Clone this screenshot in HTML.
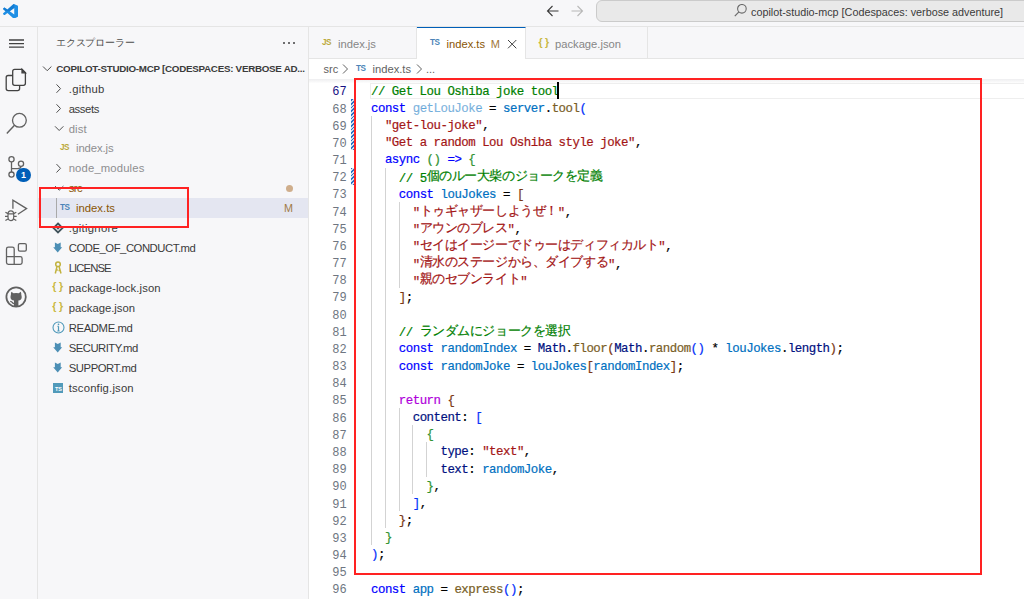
<!DOCTYPE html><html><head><meta charset="utf-8"><style>
*{margin:0;padding:0;box-sizing:border-box}
html,body{width:1024px;height:599px;overflow:hidden;background:#fff}
body{position:relative;font-family:"Liberation Sans",sans-serif;color:#3b3b3b}
.abs{position:absolute}
.t{position:absolute;white-space:pre}
.code{position:absolute;white-space:pre;-webkit-text-stroke:0.2px currentColor;font-family:"Liberation Mono",monospace;font-size:12.4px;letter-spacing:-0.490px;line-height:17.17px;height:17.17px}
.ln{position:absolute;white-space:pre;font-family:"Liberation Mono",monospace;font-size:12px;letter-spacing:0.05px;text-align:right;width:40px;line-height:17.17px;color:#6e7681}
.j{display:inline-block;width:12.57px;text-align:center;letter-spacing:0;font-size:12.6px;position:relative;top:-1.5px;font-family:"Liberation Sans",sans-serif;overflow:visible}
</style></head><body>

<div class="abs" style="left:0;top:0;width:1024px;height:27px;background:#f7f7f9;border-bottom:1px solid #e5e5e5"></div>
<svg class="abs" style="left:3.3px;top:3.6px" width="15" height="14.6" viewBox="0 0 100 100" preserveAspectRatio="none">
<path d="M96.46 10.8 L75.86 0.87 C73.48 -0.28 70.63 0.2 68.76 2.07 L29.35 38.04 L12.17 25.01 C10.57 23.8 8.34 23.9 6.86 25.25 L1.35 30.26 C-0.46 31.91 -0.46 34.76 1.35 36.41 L16.25 50 L1.35 63.59 C-0.46 65.24 -0.46 68.09 1.35 69.74 L6.86 74.75 C8.34 76.1 10.57 76.2 12.17 74.99 L29.35 61.96 L68.76 97.93 C70.63 99.8 73.48 100.28 75.86 99.13 L96.46 89.2 C98.62 88.16 100 85.97 100 83.57 V16.43 C100 14.03 98.62 11.84 96.46 10.8 Z M75.02 72.7 L45.11 50 L75.02 27.3 Z" fill="#1f8fe5"/>
<path d="M68.76 2.07 L29.35 38.04 L12.17 25.01 C10.57 23.8 8.34 23.9 6.86 25.25 L1.35 30.26 C-0.46 31.91 -0.46 34.76 1.35 36.41 L16.25 50 L45.11 50 L75.02 27.3 L75.02 0.5 Z" fill="#0b6fc7" opacity="0.55"/>
</svg>
<svg class="abs" style="left:546px;top:5px" width="14" height="12" viewBox="0 0 14 12">
<path d="M6.5 1 L1.5 6 L6.5 11 M1.5 6 H12.5" stroke="#3b3b3b" stroke-width="1.1" fill="none"/></svg>
<svg class="abs" style="left:570px;top:5px" width="14" height="12" viewBox="0 0 14 12">
<path d="M7.5 1 L12.5 6 L7.5 11 M12.5 6 H1.5" stroke="#b8b8b8" stroke-width="1.1" fill="none"/></svg>
<div class="abs" style="left:596px;top:0px;width:440px;height:21.6px;background:#e9e9e9;border:1px solid #cbcbcb;border-radius:6px"></div>
<svg class="abs" style="left:734px;top:4px" width="13" height="13" viewBox="0 0 13 13">
<circle cx="7.9" cy="4.8" r="4.3" stroke="#6a6a6a" stroke-width="1.1" fill="none"/><path d="M4.9 7.9 L0.8 12.2" stroke="#6a6a6a" stroke-width="1.2"/></svg>
<div class="t" style="left:751px;top:4.86px;font-size:10.8px;line-height:14px;color:#3b3b3b">copilot-studio-mcp [Codespaces: verbose adventure]</div>
<div class="abs" style="left:0;top:27px;width:38px;height:572px;background:#f7f7f9;border-right:1px solid #e5e5e5"></div>
<svg class="abs" style="left:0;top:27px" width="37" height="300" viewBox="0 27 37 300">
<g stroke="#424242" fill="none" stroke-width="1.3">
<path d="M9 40 H24 M9 43.6 H24 M9 47.2 H24"/>
<path d="M12.6 75.5 H8.2 Q6.2 75.5 6.2 77.5 V88.6 Q6.2 90.6 8.2 90.6 H17.6 Q19.6 90.6 19.6 88.6 V85.4"/>
<path d="M14.7 69.4 H22 L25.4 72.8 V83.3 Q25.4 85.3 23.4 85.3 H14.7 Q12.7 85.3 12.7 83.3 V71.4 Q12.7 69.4 14.7 69.4 Z"/>
<path d="M22 69.4 V72.8 H25.4 Z" fill="#424242"/>
</g><g stroke="#616161" fill="none" stroke-width="1.3">
<circle cx="19.4" cy="120.3" r="6.9"/>
<path d="M14.5 125.3 L6.8 133.6" stroke-width="1.4"/>
<circle cx="11.5" cy="159.3" r="2.6"/><circle cx="11.5" cy="174.6" r="2.6"/><circle cx="21" cy="163.7" r="2.6"/>
<path d="M11.5 161.9 V172 M11.5 168.7 H17.5 Q21 168.7 21 166.3"/>
<path d="M12.9 208.8 V200.2 L26.6 208.6 L17.9 214.3"/>
<path d="M8 217 V214.2 Q8 210.9 10.85 210.9 Q13.7 210.9 13.7 214.2 V217 Q13.7 220.6 10.85 220.6 Q8 220.6 8 217 Z M8 213.8 H13.7 M5.4 212.2 L8 213.6 M16.3 212.2 L13.7 213.6 M5 216.4 H8 M13.7 216.4 H16.7 M5.4 220.6 L8 219 M16.3 220.6 L13.7 219" stroke-width="1.2"/>
<path d="M8.3 247.2 H12.4 Q14.2 247.2 14.2 249 V256.7 H20.3 Q22.1 256.7 22.1 258.5 V262.5 Q22.1 264.3 20.3 264.3 H8.3 Q6.5 264.3 6.5 262.5 V249 Q6.5 247.2 8.3 247.2 Z M6.5 256.7 H14.2 V264.3"/>
<rect x="18.4" y="243.6" width="7.9" height="7.6" rx="1.4"/>
</g>
<circle cx="16.1" cy="297" r="9.7" stroke="#616161" stroke-width="1.8" fill="none"/>
<g transform="translate(16.1 297)">
<path d="M-4.7 -5.2 L-2.6 -3.8 Q0 -4.4 2.6 -3.8 L4.7 -5.2 Q5.3 -3.6 5.2 -2.2 Q5.6 -1 5.6 0.3 Q5.6 3.2 2.3 3.6 V9.6 H-2.1 V3.6 Q-5.6 3.2 -5.6 0.3 Q-5.6 -1 -5.2 -2.2 Q-5.3 -3.6 -4.7 -5.2 Z" fill="#616161"/>
<path d="M-5.9 4.3 Q-4.5 4.3 -3.6 5.6 Q-3 6.5 -2.1 6.6" stroke="#616161" stroke-width="1.3" fill="none"/>
</g>
</svg>
<div class="abs" style="left:16.4px;top:167.6px;width:14.2px;height:14.2px;border-radius:50%;background:#005fb8;color:#fff;font-size:9px;font-weight:bold;line-height:14.2px;text-align:center">1</div>
<div class="abs" style="left:38px;top:27px;width:271px;height:572px;background:#f7f7f9;border-right:1px solid #e5e5e5"></div>
<div class="t" style="left:56px;top:36.14px;font-size:10px;line-height:14px;color:#4b4b4b"><span style="display:inline-block;width:9.8px;text-align:center">エ</span><span style="display:inline-block;width:9.8px;text-align:center">ク</span><span style="display:inline-block;width:9.8px;text-align:center">ス</span><span style="display:inline-block;width:9.8px;text-align:center">プ</span><span style="display:inline-block;width:9.8px;text-align:center">ロ</span><span style="display:inline-block;width:9.8px;text-align:center">ー</span><span style="display:inline-block;width:9.8px;text-align:center">ラ</span><span style="display:inline-block;width:9.8px;text-align:center">ー</span></div>
<div class="abs" style="left:283px;top:42px;width:2px;height:2px;background:#424242;border-radius:1px"></div>
<div class="abs" style="left:288px;top:42px;width:2px;height:2px;background:#424242;border-radius:1px"></div>
<div class="abs" style="left:293px;top:42px;width:2px;height:2px;background:#424242;border-radius:1px"></div>
<svg class="abs" style="left:0;top:0" width="320" height="599"><path d="M43.0 66.5 L47.2 70.7 L51.4 66.5" stroke="#505050" stroke-width="1" fill="none"/></svg>
<div class="t" style="left:56.3px;top:62.24px;font-size:9.8px;font-weight:bold;letter-spacing:-0.27px;line-height:14px;color:#3b3b3b">COPILOT-STUDIO-MCP [CODESPACES: VERBOSE AD...</div>
<div class="abs" style="left:38px;top:198px;width:270px;height:19.8px;background:#e4e6f1"></div>
<div class="abs" style="left:56px;top:198px;width:1px;height:19.8px;background:#a9a9a9"></div>
<svg class="abs" style="left:0;top:0" width="320" height="599"><path d="M56.5 84.4 L60.5 88.6 L56.5 92.8" stroke="#505050" stroke-width="1" fill="none"/></svg>
<div class="t" style="left:68.7px;top:80.68px;font-size:11.3px;line-height:16px;color:#3b3b3b;letter-spacing:0.30px">.github</div>
<svg class="abs" style="left:0;top:0" width="320" height="599"><path d="M56.5 104.3 L60.5 108.5 L56.5 112.7" stroke="#505050" stroke-width="1" fill="none"/></svg>
<div class="t" style="left:68.7px;top:100.61px;font-size:11.3px;line-height:16px;color:#3b3b3b;letter-spacing:-0.40px">assets</div>
<svg class="abs" style="left:0;top:0" width="320" height="599"><path d="M55.0 126.3 L59.2 130.5 L63.4 126.3" stroke="#505050" stroke-width="1" fill="none"/></svg>
<div class="t" style="left:68.7px;top:120.54px;font-size:11.3px;line-height:16px;color:#8e8e90;letter-spacing:0.10px">dist</div>
<div class="t" style="left:60px;top:143.39px;font-size:9.5px;font-weight:bold;line-height:10px;letter-spacing:-0.5px;transform:translateY(-0.6px) scaleX(0.86);transform-origin:0 0;color:#bba93a">JS</div>
<div class="t" style="left:76.0px;top:140.47px;font-size:11.3px;line-height:16px;color:#8e8e90;letter-spacing:-0.10px">index.js</div>
<svg class="abs" style="left:0;top:0" width="320" height="599"><path d="M56.5 164.1 L60.5 168.3 L56.5 172.5" stroke="#505050" stroke-width="1" fill="none"/></svg>
<div class="t" style="left:68.7px;top:160.40px;font-size:11.3px;line-height:16px;color:#8e8e90;letter-spacing:0.14px">node_modules</div>
<svg class="abs" style="left:0;top:0" width="320" height="599"><path d="M55.0 186.1 L59.2 190.2 L63.4 186.1" stroke="#505050" stroke-width="1" fill="none"/></svg>
<div class="t" style="left:68.7px;top:180.33px;font-size:11.3px;line-height:16px;color:#895503;letter-spacing:-0.50px">src</div>
<div class="t" style="left:60px;top:203.18px;font-size:9.5px;font-weight:bold;line-height:10px;letter-spacing:-0.5px;transform:translateY(-0.6px) scaleX(0.86);transform-origin:0 0;color:#4c84b8">TS</div>
<div class="t" style="left:76.0px;top:200.26px;font-size:11.3px;line-height:16px;color:#895503;letter-spacing:0.00px">index.ts</div>
<svg class="abs" style="left:52px;top:222.11px" width="12" height="12" viewBox="0 0 12 12"><path d="M6 1.5 L10.5 6 L6 10.5 L1.5 6 Z" fill="none" stroke="#41535b" stroke-width="1.8"/><path d="M6 4.3 L7.7 6 L6 7.7 L4.3 6 Z" fill="#41535b"/></svg>
<div class="t" style="left:68.7px;top:220.19px;font-size:11.3px;line-height:16px;color:#3b3b3b;letter-spacing:0.30px">.gitignore</div>
<svg class="abs" style="left:52px;top:242.04px" width="12" height="12" viewBox="0 0 12 12"><path d="M2.9 0.5 L5.8 2.1 L8.7 0.5 V5.3 H10.2 L5.7 10.4 L1.2 5.3 H2.9 Z" fill="#4d8fb5"/></svg>
<div class="t" style="left:68.7px;top:240.12px;font-size:11.3px;line-height:16px;color:#3b3b3b;letter-spacing:-0.46px">CODE_OF_CONDUCT.md</div>
<svg class="abs" style="left:53px;top:261.47px" width="10" height="13" viewBox="0 0 10 13"><circle cx="5" cy="3.2" r="2.3" stroke="#c2b340" stroke-width="1.5" fill="none"/><path d="M4 5.3 L2.3 12.5 M6 5.3 L8 12.5 M3 9 H4.8 M5.5 9.5 H7" stroke="#c2b340" stroke-width="1.5" fill="none"/></svg>
<div class="t" style="left:68.7px;top:260.05px;font-size:11.3px;line-height:16px;color:#3b3b3b;letter-spacing:-0.90px">LICENSE</div>
<div class="t" style="left:52.3px;top:279.90px;font-size:10.5px;font-weight:bold;line-height:12px;color:#c9b740;letter-spacing:-0.2px">{ }</div>
<div class="t" style="left:68.7px;top:279.98px;font-size:11.3px;line-height:16px;color:#3b3b3b;letter-spacing:0.09px">package-lock.json</div>
<div class="t" style="left:52.3px;top:299.83px;font-size:10.5px;font-weight:bold;line-height:12px;color:#c9b740;letter-spacing:-0.2px">{ }</div>
<div class="t" style="left:68.7px;top:299.91px;font-size:11.3px;line-height:16px;color:#3b3b3b;letter-spacing:-0.03px">package.json</div>
<svg class="abs" style="left:51.5px;top:321.26px" width="13" height="13" viewBox="0 0 13 13"><circle cx="6.5" cy="6.5" r="5.5" stroke="#519aba" stroke-width="1.1" fill="none"/><path d="M6.5 5.3 V10 M5.3 10 H7.7 M5.5 5.3 H6.5" stroke="#519aba" stroke-width="1.2"/><circle cx="6.5" cy="3.4" r="0.8" fill="#519aba"/></svg>
<div class="t" style="left:68.7px;top:319.84px;font-size:11.3px;line-height:16px;color:#3b3b3b;letter-spacing:-0.37px">README.md</div>
<svg class="abs" style="left:52px;top:341.69px" width="12" height="12" viewBox="0 0 12 12"><path d="M2.9 0.5 L5.8 2.1 L8.7 0.5 V5.3 H10.2 L5.7 10.4 L1.2 5.3 H2.9 Z" fill="#4d8fb5"/></svg>
<div class="t" style="left:68.7px;top:339.77px;font-size:11.3px;line-height:16px;color:#3b3b3b;letter-spacing:-0.50px">SECURITY.md</div>
<svg class="abs" style="left:52px;top:361.62px" width="12" height="12" viewBox="0 0 12 12"><path d="M2.9 0.5 L5.8 2.1 L8.7 0.5 V5.3 H10.2 L5.7 10.4 L1.2 5.3 H2.9 Z" fill="#4d8fb5"/></svg>
<div class="t" style="left:68.7px;top:359.70px;font-size:11.3px;line-height:16px;color:#3b3b3b;letter-spacing:-0.43px">SUPPORT.md</div>
<div class="abs" style="left:52.5px;top:382.55px;width:10px;height:10px;background:#519aba"><div class="t" style="left:2.5px;top:3px;font-size:5.5px;font-weight:bold;line-height:7px;color:#fff">TS</div></div>
<div class="t" style="left:68.7px;top:379.63px;font-size:11.3px;line-height:16px;color:#3b3b3b;letter-spacing:0.18px">tsconfig.json</div>
<div class="abs" style="left:285.5px;top:184.5px;width:7px;height:7px;border-radius:50%;background:#cfae8c"></div>
<div class="t" style="left:284px;top:200.26px;font-size:10.8px;line-height:16px;color:#895503;opacity:.75">M</div>
<div class="abs" style="left:39px;top:187px;width:150px;height:40.6px;border:2px solid #ff2222;z-index:5"></div>
<div class="abs" style="left:309px;top:27px;width:715px;height:572px;background:#ffffff"></div>
<div class="abs" style="left:309px;top:27px;width:715px;height:32px;background:#f7f7f9;border-bottom:1px solid #e5e5e5"></div>
<div class="abs" style="left:309px;top:27px;width:108px;height:31.5px;border-right:1px solid #e5e5e5"></div>
<div class="t" style="left:322px;top:38.00px;font-size:9.5px;font-weight:bold;line-height:10px;letter-spacing:-0.5px;transform:translateY(-0.6px) scaleX(0.86);transform-origin:0 0;color:#bba93a">JS</div>
<div class="t" style="left:338px;top:35.62px;font-size:11.2px;line-height:16px;color:#868686">index.js</div>
<div class="abs" style="left:417px;top:27px;width:109px;height:32px;background:#fff;border-top:1px solid #005fb8;border-right:1px solid #e5e5e5"></div>
<div class="t" style="left:430px;top:38.00px;font-size:9.5px;font-weight:bold;line-height:10px;letter-spacing:-0.5px;transform:translateY(-0.6px) scaleX(0.86);transform-origin:0 0;color:#4c84b8">TS</div>
<div class="t" style="left:446.5px;top:35.62px;font-size:11.2px;line-height:16px;color:#895503">index.ts</div>
<div class="t" style="left:490.8px;top:35.69px;font-size:11px;line-height:16px;color:#895503;opacity:.8">M</div>
<svg class="abs" style="left:507px;top:38.5px" width="10" height="10" viewBox="0 0 10 10"><path d="M1 1 L9.3 9.3 M9.3 1 L1 9.3" stroke="#424242" stroke-width="1"/></svg>
<div class="abs" style="left:526px;top:27px;width:121.5px;height:31.5px;border-right:1px solid #e5e5e5"></div>
<div class="t" style="left:538.5px;top:35.50px;font-size:10.5px;font-weight:bold;line-height:12px;color:#c9b740;letter-spacing:-0.2px">{ }</div>
<div class="t" style="left:555px;top:35.62px;font-size:11.2px;line-height:16px;color:#868686">package.json</div>
<div class="t" style="left:323.5px;top:60.89px;font-size:11px;line-height:16px;color:#616161">src</div>
<svg class="abs" style="left:341px;top:62px" width="9" height="14" viewBox="0 0 9 14"><path d="M2 2.5 L6.5 7 L2 11.5" stroke="#616161" stroke-width="1" fill="none"/></svg>
<div class="t" style="left:356px;top:63.50px;font-size:9.5px;font-weight:bold;line-height:10px;letter-spacing:-0.5px;transform:translateY(-0.6px) scaleX(0.86);transform-origin:0 0;color:#4c84b8">TS</div>
<div class="t" style="left:372.5px;top:60.82px;font-size:11.2px;line-height:16px;color:#616161">index.ts</div>
<svg class="abs" style="left:415px;top:62px" width="9" height="14" viewBox="0 0 9 14"><path d="M2 2.5 L6.5 7 L2 11.5" stroke="#616161" stroke-width="1" fill="none"/></svg>
<div class="t" style="left:426px;top:60.89px;font-size:11px;line-height:16px;color:#616161">...</div>
<div class="abs" style="left:309px;top:79px;width:715px;height:4px;background:linear-gradient(#eeeef0,#fdfdfd)"></div>
<div class="abs" style="left:370px;top:82.70px;width:654px;height:16.17px;border:1px solid #eeeeee;border-right:none"></div>
<div class="abs" style="left:371.0px;top:116.04px;width:1px;height:429.25px;background:#d3d3d3"></div>
<div class="abs" style="left:385.0px;top:167.55px;width:1px;height:360.57px;background:#d3d3d3"></div>
<div class="abs" style="left:398.5px;top:201.89px;width:1px;height:85.85px;background:#d3d3d3"></div>
<div class="abs" style="left:398.5px;top:407.93px;width:1px;height:103.02px;background:#d3d3d3"></div>
<div class="abs" style="left:412.0px;top:425.10px;width:1px;height:68.68px;background:#d3d3d3"></div>
<div class="abs" style="left:426.0px;top:442.27px;width:1px;height:34.34px;background:#d3d3d3"></div>
<div class="abs" style="left:351px;top:98.87px;width:3px;height:51.51px;background:repeating-linear-gradient(-45deg,#2a72c4 0 1.3px,#cfe0f2 1.3px 2.6px)"></div>
<div class="abs" style="left:351px;top:167.55px;width:3px;height:17.17px;background:repeating-linear-gradient(-45deg,#2a72c4 0 1.3px,#cfe0f2 1.3px 2.6px)"></div>
<div class="ln" style="left:306.8px;top:84.42px;color:#171184">67</div>
<div class="code" style="left:371.00px;top:83.81px"><span style="color:#008000">// Get Lou Oshiba joke tool</span></div>
<div class="ln" style="left:306.8px;top:101.59px;color:#6e7681">68</div>
<div class="code" style="left:371.00px;top:100.98px"><span style="color:#0000ff">const</span><span style="color:#000000"> </span><span style="color:rgba(0,112,193,0.5)">getLouJoke</span><span style="color:#000000"> = </span><span style="color:#0070c1">server</span><span style="color:#000000">.</span><span style="color:#795e26">tool</span><span style="color:#0431fa">(</span></div>
<div class="ln" style="left:306.8px;top:118.76px;color:#6e7681">69</div>
<div class="code" style="left:371.00px;top:118.15px"><span style="color:#000000">  </span><span style="color:#a31515">&quot;get-lou-joke&quot;</span><span style="color:#000000">,</span></div>
<div class="ln" style="left:306.8px;top:135.93px;color:#6e7681">70</div>
<div class="code" style="left:371.00px;top:135.32px"><span style="color:#000000">  </span><span style="color:#a31515">&quot;Get a random Lou Oshiba style joke&quot;</span><span style="color:#000000">,</span></div>
<div class="ln" style="left:306.8px;top:153.10px;color:#6e7681">71</div>
<div class="code" style="left:371.00px;top:152.49px"><span style="color:#000000">  </span><span style="color:#0000ff">async</span><span style="color:#000000"> </span><span style="color:#319331">()</span><span style="color:#000000"> </span><span style="color:#0000ff">=&gt;</span><span style="color:#000000"> </span><span style="color:#319331">{</span></div>
<div class="ln" style="left:306.8px;top:170.27px;color:#6e7681">72</div>
<div class="code" style="left:371.00px;top:169.66px"><span style="color:#000000">    </span><span style="color:#008000">// 5</span><span style="color:#008000"><span class="j">個</span><span class="j">の</span><span class="j">ル</span><span class="j">ー</span><span class="j">大</span><span class="j">柴</span><span class="j">の</span><span class="j">ジ</span><span class="j">ョ</span><span class="j">ー</span><span class="j">ク</span><span class="j">を</span><span class="j">定</span><span class="j">義</span></span></div>
<div class="ln" style="left:306.8px;top:187.44px;color:#6e7681">73</div>
<div class="code" style="left:371.00px;top:186.83px"><span style="color:#000000">    </span><span style="color:#0000ff">const</span><span style="color:#000000"> </span><span style="color:#0070c1">louJokes</span><span style="color:#000000"> = </span><span style="color:#7b3814">[</span></div>
<div class="ln" style="left:306.8px;top:204.61px;color:#6e7681">74</div>
<div class="code" style="left:371.00px;top:204.00px"><span style="color:#000000">      </span><span style="color:#a31515">&quot;</span><span style="color:#a31515"><span class="j">ト</span><span class="j">ゥ</span><span class="j">ギ</span><span class="j">ャ</span><span class="j">ザ</span><span class="j">ー</span><span class="j">し</span><span class="j">よ</span><span class="j">う</span><span class="j">ぜ</span><span class="j">！</span></span><span style="color:#a31515">&quot;</span><span style="color:#000000">,</span></div>
<div class="ln" style="left:306.8px;top:221.78px;color:#6e7681">75</div>
<div class="code" style="left:371.00px;top:221.17px"><span style="color:#000000">      </span><span style="color:#a31515">&quot;</span><span style="color:#a31515"><span class="j">ア</span><span class="j">ウ</span><span class="j">ン</span><span class="j">の</span><span class="j">ブ</span><span class="j">レ</span><span class="j">ス</span></span><span style="color:#a31515">&quot;</span><span style="color:#000000">,</span></div>
<div class="ln" style="left:306.8px;top:238.95px;color:#6e7681">76</div>
<div class="code" style="left:371.00px;top:238.34px"><span style="color:#000000">      </span><span style="color:#a31515">&quot;</span><span style="color:#a31515"><span class="j">セ</span><span class="j">イ</span><span class="j">は</span><span class="j">イ</span><span class="j">ー</span><span class="j">ジ</span><span class="j">ー</span><span class="j">で</span><span class="j">ド</span><span class="j">ゥ</span><span class="j">ー</span><span class="j">は</span><span class="j">デ</span><span class="j">ィ</span><span class="j">フ</span><span class="j">ィ</span><span class="j">カ</span><span class="j">ル</span><span class="j">ト</span></span><span style="color:#a31515">&quot;</span><span style="color:#000000">,</span></div>
<div class="ln" style="left:306.8px;top:256.12px;color:#6e7681">77</div>
<div class="code" style="left:371.00px;top:255.51px"><span style="color:#000000">      </span><span style="color:#a31515">&quot;</span><span style="color:#a31515"><span class="j">清</span><span class="j">水</span><span class="j">の</span><span class="j">ス</span><span class="j">テ</span><span class="j">ー</span><span class="j">ジ</span><span class="j">か</span><span class="j">ら</span><span class="j">、</span><span class="j">ダ</span><span class="j">イ</span><span class="j">ブ</span><span class="j">す</span><span class="j">る</span></span><span style="color:#a31515">&quot;</span><span style="color:#000000">,</span></div>
<div class="ln" style="left:306.8px;top:273.29px;color:#6e7681">78</div>
<div class="code" style="left:371.00px;top:272.68px"><span style="color:#000000">      </span><span style="color:#a31515">&quot;</span><span style="color:#a31515"><span class="j">親</span><span class="j">の</span><span class="j">セ</span><span class="j">ブ</span><span class="j">ン</span><span class="j">ラ</span><span class="j">イ</span><span class="j">ト</span></span><span style="color:#a31515">&quot;</span></div>
<div class="ln" style="left:306.8px;top:290.46px;color:#6e7681">79</div>
<div class="code" style="left:371.00px;top:289.85px"><span style="color:#000000">    </span><span style="color:#7b3814">]</span><span style="color:#000000">;</span></div>
<div class="ln" style="left:306.8px;top:307.63px;color:#6e7681">80</div>
<div class="code" style="left:371.00px;top:307.02px"></div>
<div class="ln" style="left:306.8px;top:324.80px;color:#6e7681">81</div>
<div class="code" style="left:371.00px;top:324.19px"><span style="color:#000000">    </span><span style="color:#008000">// </span><span style="color:#008000"><span class="j">ラ</span><span class="j">ン</span><span class="j">ダ</span><span class="j">ム</span><span class="j">に</span><span class="j">ジ</span><span class="j">ョ</span><span class="j">ー</span><span class="j">ク</span><span class="j">を</span><span class="j">選</span><span class="j">択</span></span></div>
<div class="ln" style="left:306.8px;top:341.97px;color:#6e7681">82</div>
<div class="code" style="left:371.00px;top:341.36px"><span style="color:#000000">    </span><span style="color:#0000ff">const</span><span style="color:#000000"> </span><span style="color:#0070c1">randomIndex</span><span style="color:#000000"> = </span><span style="color:#001080">Math</span><span style="color:#000000">.</span><span style="color:#795e26">floor</span><span style="color:#7b3814">(</span><span style="color:#001080">Math</span><span style="color:#000000">.</span><span style="color:#795e26">random</span><span style="color:#0431fa">()</span><span style="color:#000000"> * </span><span style="color:#0070c1">louJokes</span><span style="color:#000000">.</span><span style="color:#001080">length</span><span style="color:#7b3814">)</span><span style="color:#000000">;</span></div>
<div class="ln" style="left:306.8px;top:359.14px;color:#6e7681">83</div>
<div class="code" style="left:371.00px;top:358.53px"><span style="color:#000000">    </span><span style="color:#0000ff">const</span><span style="color:#000000"> </span><span style="color:#0070c1">randomJoke</span><span style="color:#000000"> = </span><span style="color:#0070c1">louJokes</span><span style="color:#7b3814">[</span><span style="color:#0070c1">randomIndex</span><span style="color:#7b3814">]</span><span style="color:#000000">;</span></div>
<div class="ln" style="left:306.8px;top:376.31px;color:#6e7681">84</div>
<div class="code" style="left:371.00px;top:375.70px"></div>
<div class="ln" style="left:306.8px;top:393.48px;color:#6e7681">85</div>
<div class="code" style="left:371.00px;top:392.87px"><span style="color:#000000">    </span><span style="color:#af00db">return</span><span style="color:#000000"> </span><span style="color:#7b3814">{</span></div>
<div class="ln" style="left:306.8px;top:410.65px;color:#6e7681">86</div>
<div class="code" style="left:371.00px;top:410.04px"><span style="color:#000000">      </span><span style="color:#001080">content</span><span style="color:#000000">: </span><span style="color:#0431fa">[</span></div>
<div class="ln" style="left:306.8px;top:427.82px;color:#6e7681">87</div>
<div class="code" style="left:371.00px;top:427.21px"><span style="color:#000000">        </span><span style="color:#319331">{</span></div>
<div class="ln" style="left:306.8px;top:444.99px;color:#6e7681">88</div>
<div class="code" style="left:371.00px;top:444.38px"><span style="color:#000000">          </span><span style="color:#001080">type</span><span style="color:#000000">: </span><span style="color:#a31515">&quot;text&quot;</span><span style="color:#000000">,</span></div>
<div class="ln" style="left:306.8px;top:462.16px;color:#6e7681">89</div>
<div class="code" style="left:371.00px;top:461.55px"><span style="color:#000000">          </span><span style="color:#001080">text</span><span style="color:#000000">: </span><span style="color:#0070c1">randomJoke</span><span style="color:#000000">,</span></div>
<div class="ln" style="left:306.8px;top:479.33px;color:#6e7681">90</div>
<div class="code" style="left:371.00px;top:478.72px"><span style="color:#000000">        </span><span style="color:#319331">}</span><span style="color:#000000">,</span></div>
<div class="ln" style="left:306.8px;top:496.50px;color:#6e7681">91</div>
<div class="code" style="left:371.00px;top:495.89px"><span style="color:#000000">      </span><span style="color:#0431fa">]</span><span style="color:#000000">,</span></div>
<div class="ln" style="left:306.8px;top:513.67px;color:#6e7681">92</div>
<div class="code" style="left:371.00px;top:513.06px"><span style="color:#000000">    </span><span style="color:#7b3814">}</span><span style="color:#000000">;</span></div>
<div class="ln" style="left:306.8px;top:530.84px;color:#6e7681">93</div>
<div class="code" style="left:371.00px;top:530.23px"><span style="color:#000000">  </span><span style="color:#319331">}</span></div>
<div class="ln" style="left:306.8px;top:548.01px;color:#6e7681">94</div>
<div class="code" style="left:371.00px;top:547.40px"><span style="color:#0431fa">)</span><span style="color:#000000">;</span></div>
<div class="ln" style="left:306.8px;top:565.18px;color:#6e7681">95</div>
<div class="code" style="left:371.00px;top:564.57px"></div>
<div class="ln" style="left:306.8px;top:582.35px;color:#6e7681">96</div>
<div class="code" style="left:371.00px;top:581.74px"><span style="color:#0000ff">const</span><span style="color:#000000"> </span><span style="color:#0070c1">app</span><span style="color:#000000"> = </span><span style="color:#795e26">express</span><span style="color:#0431fa">()</span><span style="color:#000000">;</span></div>
<div class="abs" style="left:557px;top:82.30px;width:2px;height:16.6px;background:#000"></div>
<div class="abs" style="left:353.5px;top:77.5px;width:628.5px;height:497.5px;border:2px solid #ff2222"></div>
</body></html>
